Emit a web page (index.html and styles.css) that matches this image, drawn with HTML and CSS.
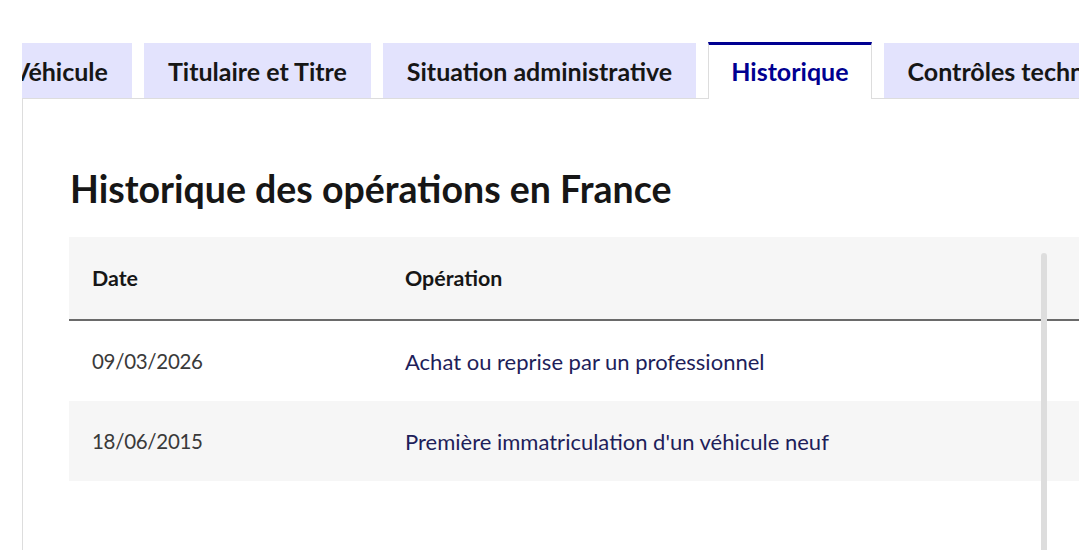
FILE: index.html
```html
<!DOCTYPE html>
<html>
<head>
  <title>Historique du véhicule</title>
  <link rel="stylesheet" href="styles.css">
</head>
<body>
  <div class="tabs">
    <!-- Onglets -->
    <div class="tabs-clip">
      <ul class="tabs-list">
        <li class="tab">Véhicule</li>
        <li class="tab">Titulaire et Titre</li>
        <li class="tab">Situation administrative</li>
        <li class="tab tab-active">Historique</li>
        <li class="tab">Contrôles techniques</li>
      </ul>
    </div>

    <!-- Panneau Historique -->
    <div class="panel">
      <h2>Historique des opérations en France</h2>
      <div class="table-wrap">
        <table>
          <thead>
            <tr>
              <th class="col-date">Date</th>
              <th>Opération</th>
            </tr>
          </thead>
          <tbody>
            <tr>
              <td class="col-date">09/03/2026</td>
              <td class="op">Achat ou reprise par un professionnel</td>
            </tr>
            <tr class="odd">
              <td class="col-date">18/06/2015</td>
              <td class="op">Première immatriculation d'un véhicule neuf</td>
            </tr>
          </tbody>
        </table>
        <div class="scroll-line"></div>
      </div>
    </div>
  </div>
</body>
</html>
```

FILE: styles.css
```css
/* Basis: geen marge, schreefloze letter */
body {
  margin: 0;
  font-family: Lato, "Noto Sans", sans-serif;
  color: #161616;
  background: white;
  overflow: hidden;
}

.tabs {
  padding: 42px 0 0 22px;
}

/* Onglets: horizontaal verschoven lijst */
.tabs-clip {
  overflow: hidden;
  height: 57px;
}

.tabs-list {
  display: flex;
  gap: 12px;
  list-style: none;
  margin: 0 0 0 -33px;
  padding: 0;
  white-space: nowrap;
}

.tab {
  background-color: #e3e3fd;
  font-weight: 700;
  font-size: 25px;
  height: 55px;
  margin-top: 1px;
  line-height: 56px;
  padding: 0 24px;
  box-sizing: border-box;
  flex-shrink: 0;
}

.tab-active {
  background-color: white;
  color: #000091;
  border-top: 3px solid #000091;
  border-left: 1px solid #dddddd;
  border-right: 1px solid #dddddd;
  margin-top: 0;
  height: 57px;
  line-height: 52px;
  padding: 0 22px;
}

/* Paneel met rand */
.panel {
  border-left: 1px solid #dddddd;
  border-top: 1px solid #dddddd;
  margin-top: -1px;
  padding: 68px 0 0 46px;
  height: 460px;
}

h2 {
  font-size: 37.5px;
  line-height: 44px;
  font-weight: 700;
  margin: 0 0 26px 1px;
}

.table-wrap {
  position: relative;
}

table {
  border-collapse: collapse;
  width: 1100px;
  font-size: 20.5px;
}

th {
  background-color: #f6f6f6;
  text-align: left;
  font-weight: 700;
  font-size: 21.4px;
  height: 82px;
  padding: 0 23px;
  border-bottom: 2px solid #6a6a6a;
}

td {
  height: 80px;
  padding: 0 23px;
}

.col-date {
  width: 267px;
}

td.col-date {
  color: #3a3a3a;
  letter-spacing: -0.3px;
}

.op {
  color: #1e1e5a;
  font-size: 22px;
}

tr.odd td {
  background-color: #f6f6f6;
}

/* Verticale schuiflijn over de tabel */
.scroll-line {
  position: absolute;
  left: 972px;
  top: 16px;
  width: 6px;
  height: 320px;
  background-color: #dddddd;
  border-radius: 3px 3px 0 0;
}
```
